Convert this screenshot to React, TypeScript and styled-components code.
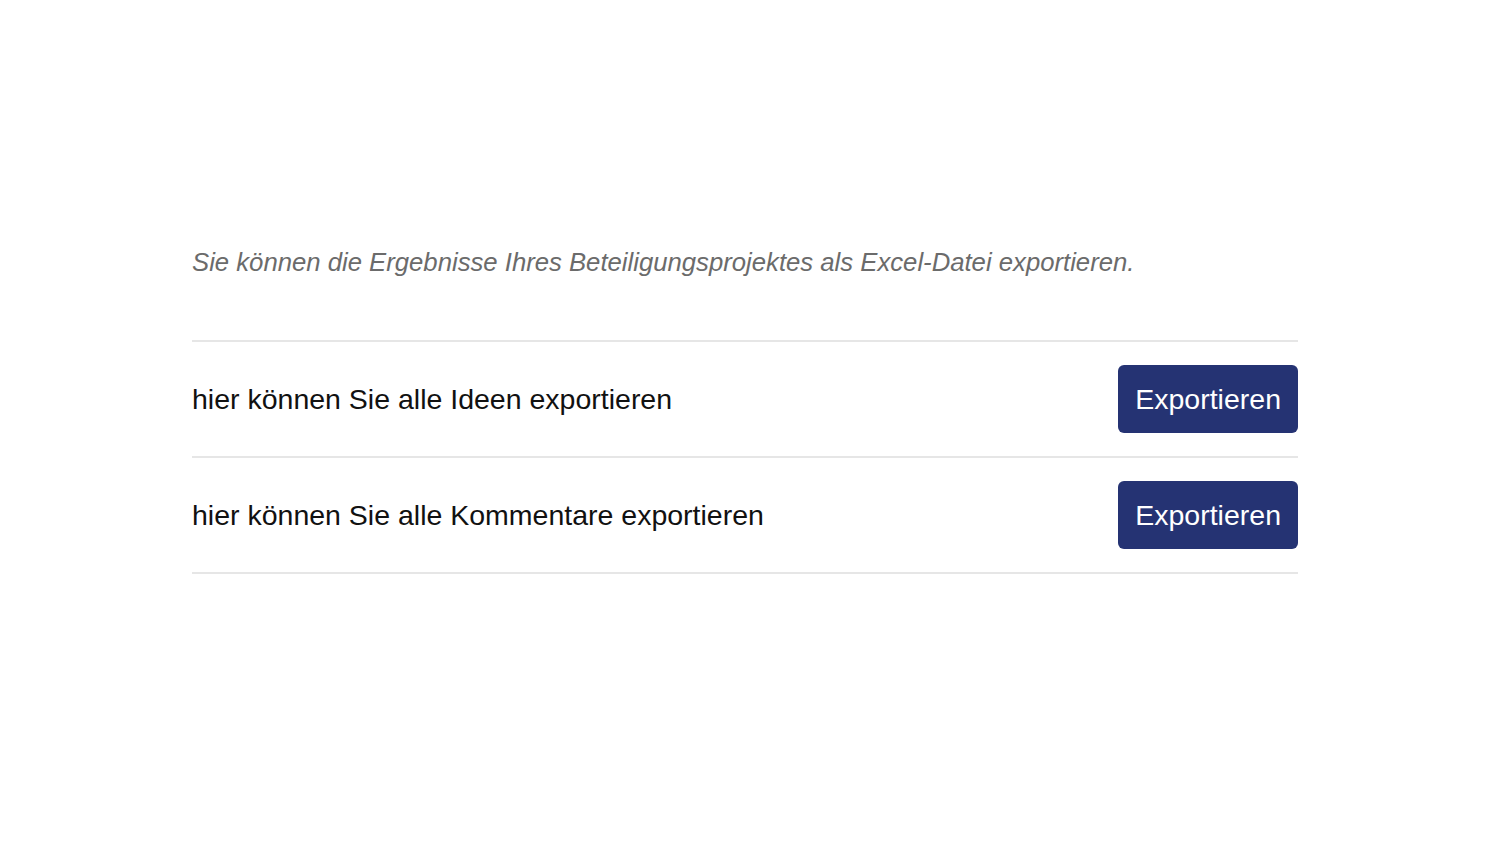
import styled, {createGlobalStyle} from 'styled-components';

const GlobalStyle = createGlobalStyle`
    html, body {
        margin: 0;
        padding: 0;
        background: #ffffff;
        font-family: "Liberation Sans", Arial, sans-serif;
    }
`;

const Page = styled.div`
    width: 1106px;
    margin-left: 192px;
    padding-top: 246px;
`;

const Intro = styled.p`
    margin: 0 0 62px;
    font-size: 25.7px;
    line-height: 32px;
    font-style: italic;
    color: #6b6b6b;
`;

const List = styled.div`
    border-top: 2px solid #e6e6e6;
`;

const Row = styled.div`
    display: flex;
    align-items: center;
    justify-content: space-between;
    padding: 23px 0;
    border-bottom: 2px solid #e6e6e6;
`;

const Label = styled.span`
    font-size: 28.5px;
    color: #111111;
`;

const ExportButton = styled.button`
    height: 68px;
    padding: 0 17px;
    border: none;
    border-radius: 6px;
    background: #253373;
    color: #ffffff;
    font-family: "Liberation Sans", Arial, sans-serif;
    font-size: 28.5px;
    cursor: pointer;
`;

const exports = [
    "hier können Sie alle Ideen exportieren",
    "hier können Sie alle Kommentare exportieren",
];

const App = () => {
    return (
        <>
            <GlobalStyle/>
            <Page>
                <Intro>Sie können die Ergebnisse Ihres Beteiligungsprojektes als Excel-Datei exportieren.</Intro>
                <List>
                    {exports.map((text, index) => (
                        <Row key={index}>
                            <Label>{text}</Label>
                            <ExportButton>Exportieren</ExportButton>
                        </Row>
                    ))}
                </List>
            </Page>
        </>
    );
};

export default App;
